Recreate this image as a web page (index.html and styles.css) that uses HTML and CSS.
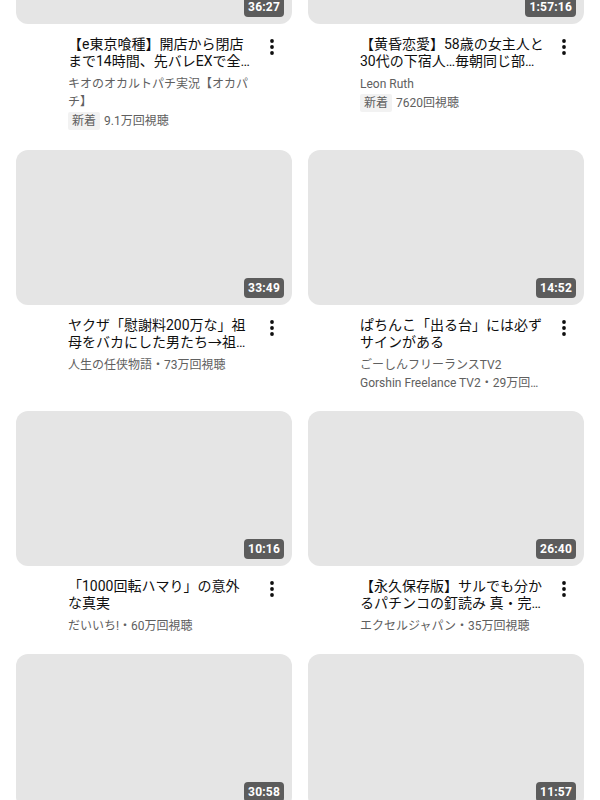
FILE: index.html
```html
<!DOCTYPE html>
<html lang="ja">
<head>
<meta charset="utf-8">
<title>Videos</title>
<link rel="stylesheet" href="styles.css">
</head>
<body>
<main class="feed">
  <article class="card">
    <div class="thumb"><span class="duration">36:27</span></div>
    <div class="info">
      <div class="text">
        <h3 class="title">【e東京喰種】開店から閉店まで14時間、先バレEXで全…</h3>
        <p class="meta">キオのオカルトパチ実況【オカパチ】</p>
        <p class="meta stats"><span class="tag">新着</span>9.1万回視聴</p>
      </div>
      <button class="menu" aria-label="メニュー"><svg viewBox="0 0 24 24" width="24" height="24"><circle cx="12" cy="5" r="1.9"/><circle cx="12" cy="11" r="1.9"/><circle cx="12" cy="17" r="1.9"/></svg></button>
    </div>
  </article>
  <article class="card">
    <div class="thumb"><span class="duration">1:57:16</span></div>
    <div class="info">
      <div class="text">
        <h3 class="title">【黄昏恋愛】58歳の女主人と30代の下宿人…毎朝同じ部…</h3>
        <p class="meta">Leon Ruth</p>
        <p class="meta stats"><span class="tag">新着</span>7620回視聴</p>
      </div>
      <button class="menu" aria-label="メニュー"><svg viewBox="0 0 24 24" width="24" height="24"><circle cx="12" cy="5" r="1.9"/><circle cx="12" cy="11" r="1.9"/><circle cx="12" cy="17" r="1.9"/></svg></button>
    </div>
  </article>
  <article class="card">
    <div class="thumb"><span class="duration">33:49</span></div>
    <div class="info">
      <div class="text">
        <h3 class="title">ヤクザ「慰謝料200万な」祖母をバカにした男たち→祖…</h3>
        <p class="meta">人生の任侠物語・73万回視聴</p>
      </div>
      <button class="menu" aria-label="メニュー"><svg viewBox="0 0 24 24" width="24" height="24"><circle cx="12" cy="5" r="1.9"/><circle cx="12" cy="11" r="1.9"/><circle cx="12" cy="17" r="1.9"/></svg></button>
    </div>
  </article>
  <article class="card">
    <div class="thumb"><span class="duration">14:52</span></div>
    <div class="info">
      <div class="text">
        <h3 class="title">ぱちんこ「出る台」には必ずサインがある</h3>
        <p class="meta clamp">ごーしんフリーランスTV2 Gorshin Freelance TV2・29万回…</p>
      </div>
      <button class="menu" aria-label="メニュー"><svg viewBox="0 0 24 24" width="24" height="24"><circle cx="12" cy="5" r="1.9"/><circle cx="12" cy="11" r="1.9"/><circle cx="12" cy="17" r="1.9"/></svg></button>
    </div>
  </article>
  <article class="card">
    <div class="thumb"><span class="duration">10:16</span></div>
    <div class="info">
      <div class="text">
        <h3 class="title">「1000回転ハマり」の意外な真実</h3>
        <p class="meta">だいいち!・60万回視聴</p>
      </div>
      <button class="menu" aria-label="メニュー"><svg viewBox="0 0 24 24" width="24" height="24"><circle cx="12" cy="5" r="1.9"/><circle cx="12" cy="11" r="1.9"/><circle cx="12" cy="17" r="1.9"/></svg></button>
    </div>
  </article>
  <article class="card">
    <div class="thumb"><span class="duration">26:40</span></div>
    <div class="info">
      <div class="text">
        <h3 class="title">【永久保存版】サルでも分かるパチンコの釘読み 真・完…</h3>
        <p class="meta">エクセルジャパン・35万回視聴</p>
      </div>
      <button class="menu" aria-label="メニュー"><svg viewBox="0 0 24 24" width="24" height="24"><circle cx="12" cy="5" r="1.9"/><circle cx="12" cy="11" r="1.9"/><circle cx="12" cy="17" r="1.9"/></svg></button>
    </div>
  </article>
  <article class="card">
    <div class="thumb"><span class="duration">30:58</span></div>
  </article>
  <article class="card">
    <div class="thumb"><span class="duration">11:57</span></div>
  </article>
</main>
</body>
</html>
```

FILE: styles.css
```css
* {
  box-sizing: border-box;
}

html, body {
  margin: 0;
  padding: 0;
  background: #ffffff;
  overflow: hidden;
}

body {
  font-family: Roboto, "Noto Sans CJK JP", sans-serif;
  color: #0f0f0f;
}

.feed {
  display: grid;
  grid-template-columns: 1fr 1fr;
  column-gap: 16px;
  row-gap: 19px;
  padding: 0 16px;
  margin-top: -131px;
  align-items: start;
}

.card {
  display: flex;
  flex-direction: column;
  min-width: 0;
}

.thumb {
  position: relative;
  width: 100%;
  height: 155px;
  background: #e5e5e5;
  border-radius: 12px;
}

.duration {
  position: absolute;
  right: 8px;
  bottom: 7px;
  padding: 2px 4px;
  border-radius: 4px;
  background: rgba(0, 0, 0, 0.6);
  color: #ffffff;
  font-size: 12px;
  font-weight: 700;
  line-height: 16px;
  letter-spacing: 0.2px;
}

.info {
  display: grid;
  grid-template-columns: 1fr 24px;
  column-gap: 8px;
  padding: 12px 8px 0 52px;
}

.text {
  min-width: 0;
}

.title {
  margin: 0;
  font-size: 14px;
  font-weight: 400;
  line-height: 17px;
  display: -webkit-box;
  -webkit-box-orient: vertical;
  -webkit-line-clamp: 2;
  overflow: hidden;
}

.meta {
  margin: 5px 0 0;
  font-size: 12px;
  line-height: 18px;
  color: #606060;
}

.meta + .meta {
  margin-top: 0;
}

.clamp {
  display: -webkit-box;
  -webkit-box-orient: vertical;
  -webkit-line-clamp: 2;
  overflow: hidden;
}

.stats {
  display: flex;
  align-items: center;
  gap: 4px;
  height: 20px;
}

.tag {
  display: inline-block;
  padding: 0 4px;
  line-height: 18px;
  background: #f2f2f2;
  border-radius: 2px;
  color: #606060;
}

.menu {
  width: 24px;
  height: 24px;
  padding: 0;
  border: 0;
  background: none;
  display: flex;
  align-items: flex-start;
  justify-content: center;
}

.menu svg {
  fill: #0f0f0f;
  display: block;
}
```
